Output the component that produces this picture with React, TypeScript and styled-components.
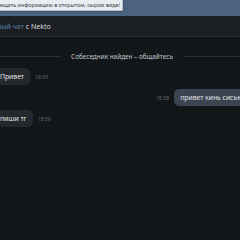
import React from 'react';
import styled, { createGlobalStyle } from 'styled-components';

const GlobalStyle = createGlobalStyle`
  html, body {
    margin: 0;
    padding: 0;
    background: #121619;
    overflow: hidden;
  }
  body {
    font-family: 'Noto Sans', 'Open Sans', sans-serif;
  }
`;

const Page = styled.div`
  width: 240px;
  height: 240px;
  overflow: hidden;
  background: #121619;
  position: relative;
`;

const TopBar = styled.div`
  height: 16px;
  background: #4b6380;
  position: relative;
`;

const Hint = styled.div`
  position: absolute;
  top: 0;
  right: 117px;
  height: 10px;
  padding: 0 2px 0 6px;
  background: #e8edf2;
  border: 1px solid #b9c3cd;
  border-top: none;
  border-radius: 0 0 2px 0;
  font-size: 5.4px;
  line-height: 10px;
  color: #3a4046;
  white-space: nowrap;
  box-shadow: 0 1px 2px rgba(0, 0, 0, 0.25);
`;

const Header = styled.div`
  height: 20px;
  background: #1b1e22;
  border-bottom: 1px solid #2a2e33;
  display: flex;
  align-items: center;
  overflow: hidden;
`;

const Title = styled.div`
  margin-left: -30px;
  font-size: 7px;
  color: #d6d9dc;
  white-space: nowrap;
`;

const TitleLink = styled.span`
  color: #5a7fa9;
`;

const Chat = styled.div`
  margin: 0 -24px 0 -20px;
  padding: 12px 0 0;
  display: flex;
  flex-direction: column;
  gap: 4px;
`;

const Divider = styled.div`
  display: flex;
  align-items: center;
  gap: 10px;
  height: 14px;
  margin-bottom: 1px;
  font-size: 6.4px;
  color: #c3c7cb;
  white-space: nowrap;

  &::before,
  &::after {
    content: '';
    flex: 1;
    height: 1px;
    background: #2b3035;
  }
`;

const Row = styled.div<{ $mine?: boolean }>`
  display: flex;
  align-items: center;
  flex-direction: ${(p) => (p.$mine ? 'row-reverse' : 'row')};
  gap: 5px;
  padding: 0 ${(p) => (p.$mine ? '13px' : '0')} 0 14px;
`;

const Bubble = styled.div<{ $mine?: boolean }>`
  height: 17px;
  padding: 0 6px;
  border-radius: 5px;
  background: ${(p) => (p.$mine ? '#3a4551' : '#24282c')};
  color: #e2e4e6;
  font-size: 6.8px;
  line-height: 17px;
  white-space: nowrap;
`;

const Time = styled.span`
  font-size: 5.2px;
  color: #61676d;
`;

const messages = [
  { text: 'Привет', time: '18:59', mine: false },
  { text: 'привет кинь сиськи', time: '18:58', mine: true },
  { text: 'пиши тг', time: '18:59', mine: false },
];

export default function App() {
  return (
    <Page>
      <GlobalStyle />
      <TopBar>
        <Hint>Не стоит размещать информацию в открытом, сыром виде!</Hint>
      </TopBar>
      <Header>
        <Title>
          <TitleLink>Анонимный чат</TitleLink> с Nekto
        </Title>
      </Header>
      <Chat>
        <Divider>Собеседник найден – общайтесь</Divider>
        {messages.map((m, i) => (
          <Row key={i} $mine={m.mine}>
            <Bubble $mine={m.mine}>{m.text}</Bubble>
            <Time>{m.time}</Time>
          </Row>
        ))}
      </Chat>
    </Page>
  );
}
